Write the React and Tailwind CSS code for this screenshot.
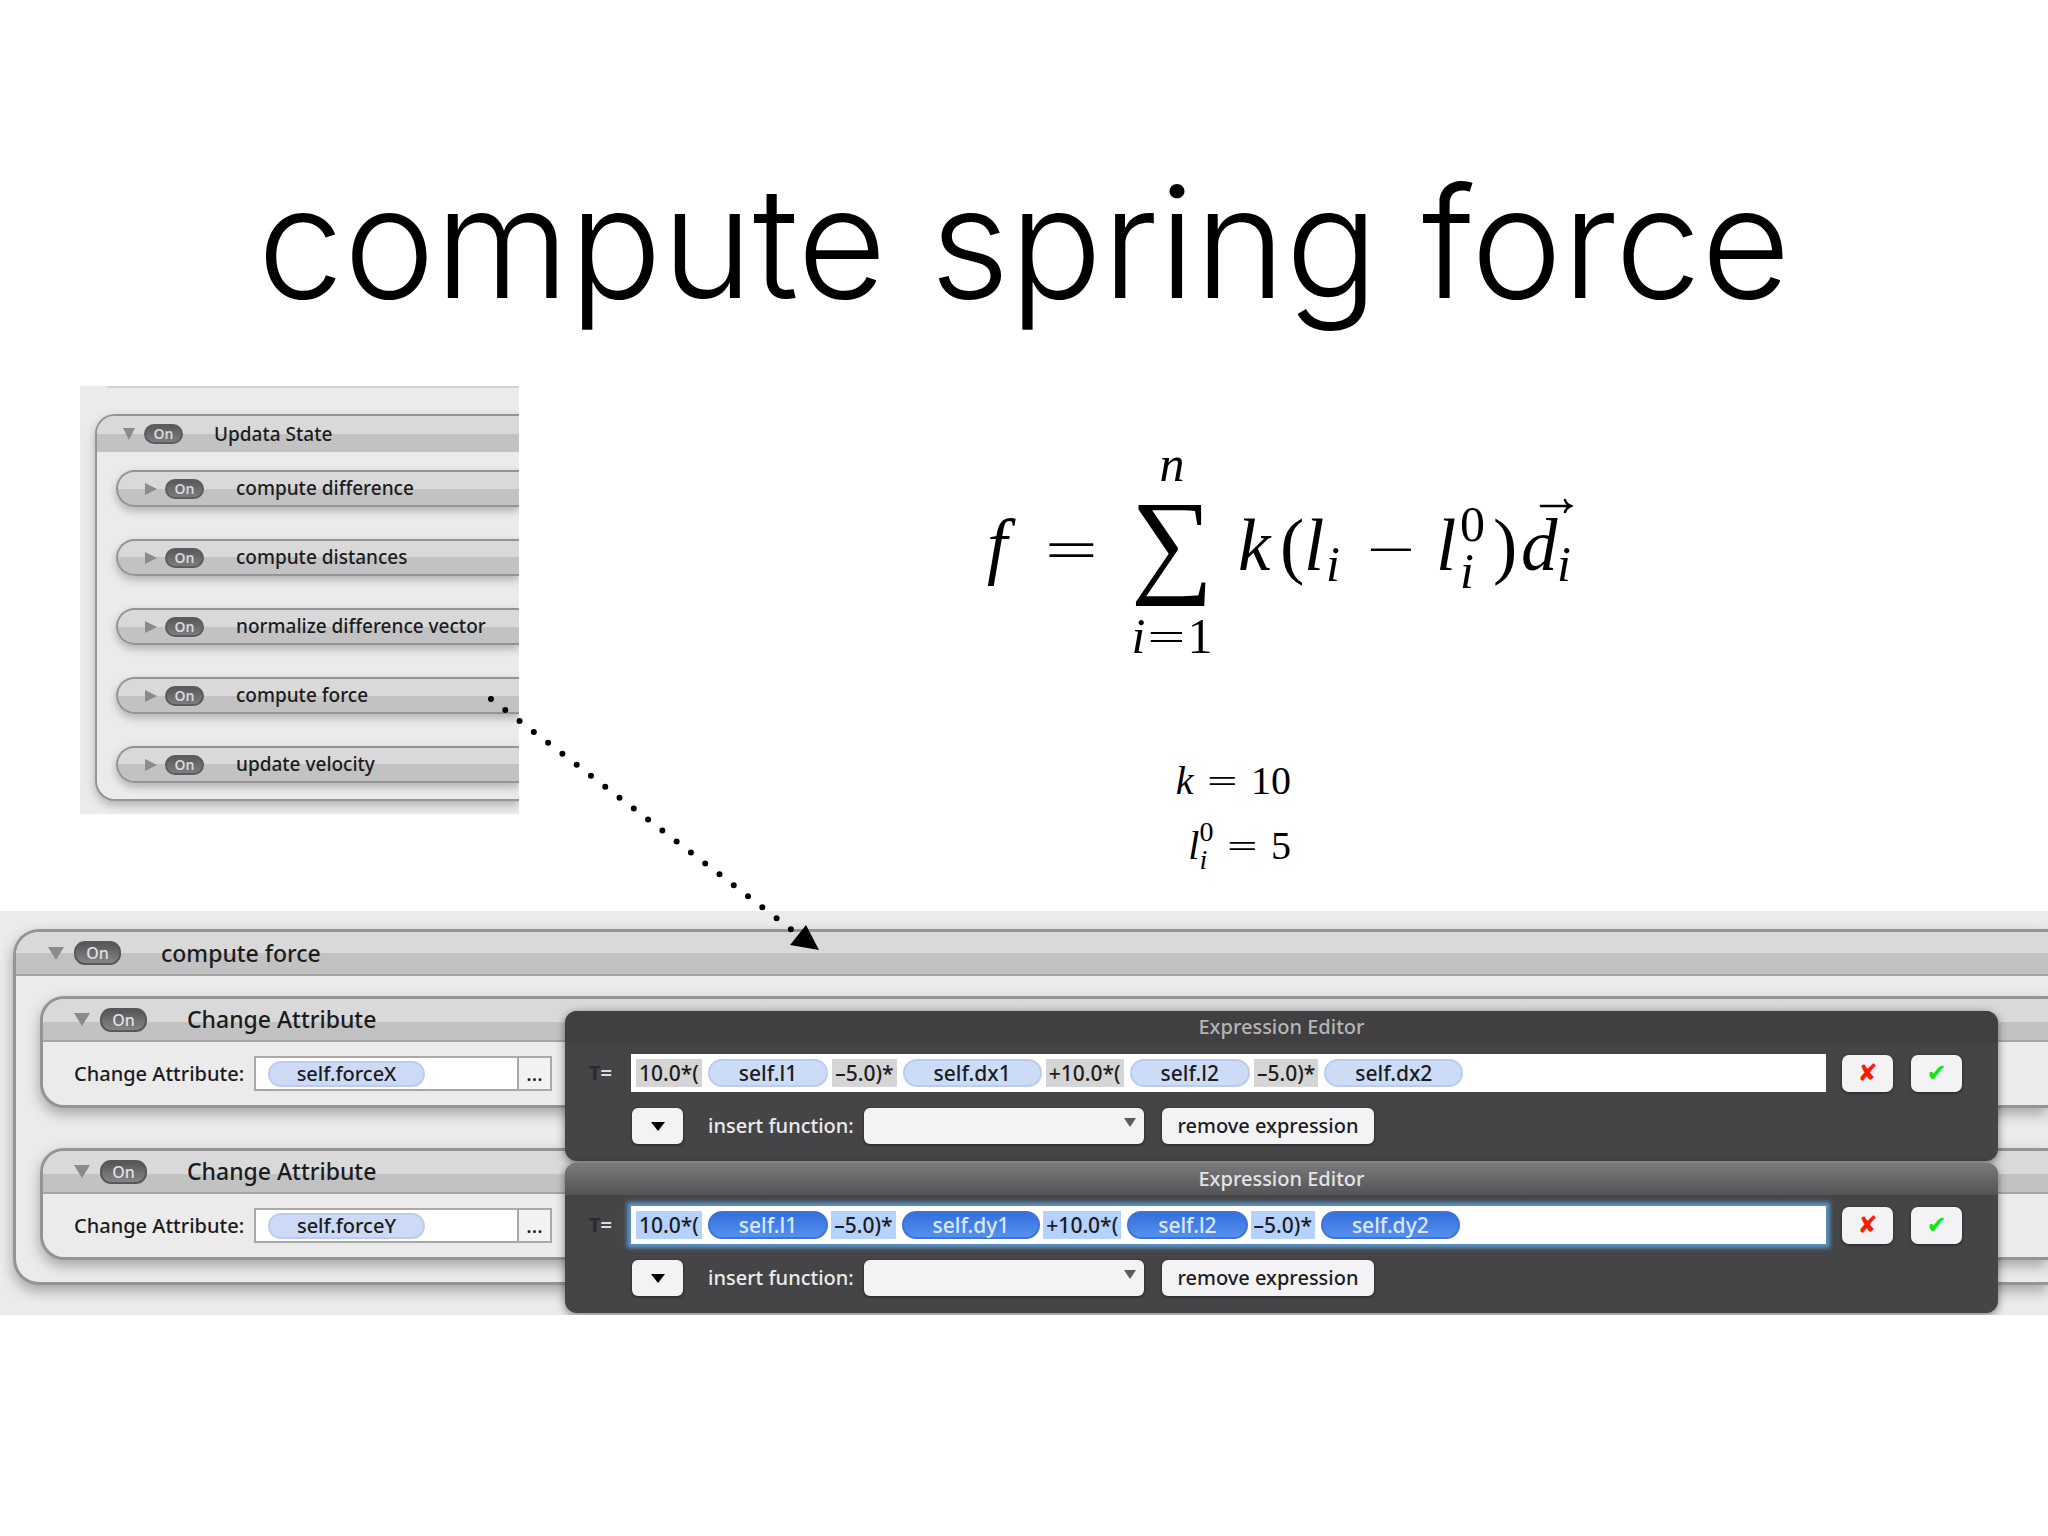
import React from "react";

const steps = [
  "compute difference",
  "compute distances",
  "normalize difference vector",
  "compute force",
  "update velocity",
];

const attributes = [
  { id: "force-x", value: "self.forceX" },
  { id: "force-y", value: "self.forceY" },
];

const editors = [
  { id: "expr-x", active: false, vars: ["self.l1", "self.dx1", "self.l2", "self.dx2"] },
  { id: "expr-y", active: true, vars: ["self.l1", "self.dy1", "self.l2", "self.dy2"] },
];

const operators = ["10.0*(", "–5.0)*", "+10.0*(", "–5.0)*"];

const Triangle = ({ open, className }) => (
  <svg viewBox="0 0 12 12" className={className} fill="#8b8b8d" preserveAspectRatio="none">
    {open ? <path d="M0 0H12L6 12Z" /> : <path d="M0 0L12 6L0 12Z" />}
  </svg>
);

const SmallOn = () => (
  <button className="w-[39px] h-5 rounded-full bg-linear-to-b from-[#5a5a5c] to-[#7d7d80] border-2 border-[#5c5c5e] text-sm leading-4 font-semibold text-[#d8d8d8]">
    On
  </button>
);

const LargeOn = () => (
  <button className="w-[47px] h-6 rounded-[11px] bg-linear-to-b from-[#565658] to-[#858587] border-2 border-[#58585a] text-base leading-5 font-medium text-[#e2e2e2]">
    On
  </button>
);

// left list with the steps of one update
const StatePanel = () => (
  <section className="w-[439px] h-[428px] overflow-hidden bg-[#ebebec] pl-[15px] text-[#1c1c1e]">
    <div className="h-[2px] ml-3 bg-[#d2d2d3]" />
    <div className="mt-[26px] h-[387px] rounded-l-[20px] border-2 border-r-0 border-[#949496] shadow-[0_4px_10px_rgba(0,0,0,0.25)] overflow-hidden bg-[#ebebec]">
      <header className="h-9 flex items-center pl-[26px] bg-linear-to-b from-[#d9d9da] from-50% to-[#c2c2c3] to-50%">
        <Triangle open className="w-3 h-3" />
        <div className="ml-[9px] flex">
          <SmallOn />
        </div>
        <h2 className="ml-[31px] text-[19px] font-medium">Updata State</h2>
      </header>
      <ul className="flex flex-col gap-8 pt-[18px] pl-[19px]">
        {steps.map((step) => (
          <li
            key={step}
            className="h-[37px] flex items-center rounded-l-full border-2 border-r-0 border-[#949496] pl-[27px] bg-linear-to-b from-[#d9d9da] from-50% to-[#c2c2c3] to-50% shadow-[0_4px_9px_rgba(0,0,0,0.25)]"
          >
            <Triangle className="w-3 h-3" />
            <div className="ml-2 flex">
              <SmallOn />
            </div>
            <span className="ml-8 text-[19px] font-medium whitespace-nowrap">{step}</span>
          </li>
        ))}
      </ul>
    </div>
  </section>
);

const SubSup = ({ className, sup, sub }) => (
  <span className={className}>
    <span className="not-italic">{sup}</span>
    <span>{sub}</span>
  </span>
);

const Formula = () => (
  <div className="flex items-center h-[200px] font-['Liberation_Serif',serif] italic text-[73px] leading-[80px] text-black">
    <span className="w-[63px] pl-2 pb-3">f</span>
    <span className="w-20 pb-2 not-italic font-['DejaVu_Sans',sans-serif] font-extralight text-[70px]">=</span>
    <span className="w-[100px] pb-1 flex flex-col items-center text-[50px] leading-[48px]">
      <span>n</span>
      <span className="pb-4 not-italic text-[116px] leading-[108px]">∑</span>
      <span className="whitespace-nowrap">
        i<span className="not-italic font-['DejaVu_Sans',sans-serif] font-extralight">=</span>
        <span className="not-italic">1</span>
      </span>
    </span>
    <span className="w-[58px] pl-4 pb-3">k</span>
    <span className="w-6 pb-3 not-italic">(</span>
    <span className="w-[22px] pb-3">l</span>
    <span className="w-[38px] pt-6 text-[50px] leading-[50px]">i</span>
    <span className="w-[72px] pb-2 not-italic font-['DejaVu_Sans',sans-serif] font-extralight text-[64px]">−</span>
    <span className="w-6 pb-3">l</span>
    <SubSup className="w-[33px] pb-2 flex flex-col text-[50px] leading-[47px]" sup="0" sub="i" />
    <span className="w-7 pb-3 not-italic">)</span>
    <span className="relative w-9 pb-3">
      d
      <svg viewBox="0 0 34 16" className="absolute left-[18px] -top-2 w-[34px] h-4" fill="none" stroke="#000" strokeWidth="2.5" strokeLinecap="round">
        <path d="M2 8H31M26 2Q27 6 32 8Q27 10 26 14" />
      </svg>
    </span>
    <span className="pt-6 text-[50px] leading-[50px]">i</span>
  </div>
);

const Constants = () => (
  <div className="flex flex-col items-end font-['Liberation_Serif',serif] italic text-[40px] leading-[65px] text-black">
    <div className="flex gap-3">
      <span>k</span>
      <span className="not-italic font-['DejaVu_Sans',sans-serif] font-extralight">=</span>
      <span className="not-italic">10</span>
    </div>
    <div className="flex items-center gap-3">
      <span className="flex items-center">
        l
        <SubSup className="flex flex-col text-[28px] leading-[28px]" sup="0" sub="i" />
      </span>
      <span className="not-italic font-['DejaVu_Sans',sans-serif] font-extralight">=</span>
      <span className="not-italic">5</span>
    </div>
  </div>
);

const AttributeBox = ({ id, value }) => (
  <div className="h-[112px] rounded-l-[24px] border-[3px] border-r-0 border-[#949496] overflow-hidden bg-[#ebebec] shadow-[0_6px_14px_rgba(0,0,0,0.3)]">
    <header className="h-[43px] flex items-center pl-[31px] border-b-2 border-[#a5a5a7] bg-linear-to-b from-[#d9d9da] from-55% to-[#c2c2c3] to-55%">
      <Triangle open className="w-4 h-[13px]" />
      <div className="ml-[10px] flex">
        <LargeOn />
      </div>
      <h3 className="ml-10 text-[23px] font-medium">Change Attribute</h3>
    </header>
    <div className="flex items-center pt-[14px] pl-[31px]">
      <label htmlFor={id} className="w-[180px] text-xl leading-8 font-medium">
        Change Attribute:
      </label>
      <div className="w-[265px] h-[35px] flex items-center pl-3 bg-white border-2 border-[#a9a9ab]">
        <span className="w-[157px] h-[26px] rounded-full bg-[#cddaf5] border-2 border-[#bccbf0] text-center text-xl leading-[22px] font-medium">
          {value}
        </span>
        <input id={id} className="min-w-0 flex-1 outline-none" />
      </div>
      <button className="w-[33px] h-[35px] border-2 border-l-0 border-[#a9a9ab] bg-[#f2f2f3] text-xl leading-7 font-medium">
        ...
      </button>
    </div>
  </div>
);

const ExpressionEditor = ({ id, active, vars }) => (
  <section className="h-[150px] rounded-[12px] bg-[#454446] shadow-[0_2px_8px_rgba(0,0,0,0.5)] overflow-hidden">
    <h3 className={active
      ? "h-8 text-center text-xl leading-8 font-medium text-[#e4e4e4] bg-linear-to-b from-[#7b7a7c] to-[#535254]"
      : "h-8 text-center text-xl leading-8 font-medium text-[#b5b5b5] bg-[#403f41]"}
    >
      Expression Editor
    </h3>
    <div className="mt-[11px] flex items-center pl-6 pr-9">
      <label htmlFor={id} className="w-[42px] flex text-xl font-bold text-[#dcdcdc]">
        <span className="text-[#2b2b2c]">T</span>
        <span>=</span>
      </label>
      <div className={active
        ? "flex-1 h-[38px] flex items-center pl-[5px] bg-white shadow-[0_0_4px_4px_#5b93c4]"
        : "flex-1 h-[38px] flex items-center pl-[5px] bg-white"}
      >
        {vars.map((name, i) => (
          <React.Fragment key={i}>
            <span className={active
              ? "h-7 px-[3px] mr-[6px] bg-[#b4d2fb] text-[21px] leading-7 font-medium text-[#1c1c1e]"
              : "h-7 px-[3px] mr-[6px] bg-[#d5d5d5] text-[21px] leading-7 font-medium text-[#1c1c1e]"}
            >
              {operators[i]}
            </span>
            <span className={active
              ? "h-7 px-[29px] mr-[3px] rounded-full border-2 border-[#3f74d6] bg-linear-to-b from-[#3470dc] to-[#5690ee] text-[21px] leading-6 font-medium text-[#dbe8ff]"
              : "h-7 px-[29px] mr-1 rounded-full border-2 border-[#bccbf0] bg-[#cddcf6] text-[21px] leading-6 font-medium text-[#1c1c1e]"}
            >
              {name}
            </span>
          </React.Fragment>
        ))}
        <input id={id} className="min-w-0 flex-1 outline-none" />
      </div>
      <button aria-label="Cancel" className="ml-4 w-[51px] h-[37px] rounded-[7px] bg-[#f3f2f4] shadow-[0_1px_3px_#222] font-['DejaVu_Sans',sans-serif] text-2xl font-bold text-[#fb1b04]">
        ✘
      </button>
      <button aria-label="Accept" className="ml-[18px] w-[51px] h-[37px] rounded-[7px] bg-[#f3f2f4] shadow-[0_1px_3px_#222] font-['DejaVu_Sans',sans-serif] text-2xl font-bold text-[#0be90b]">
        ✔
      </button>
    </div>
    <div className="mt-4 flex items-center pl-[67px]">
      <button aria-label="Variables" className="w-[51px] h-9 flex items-center justify-center rounded-[6px] bg-[#f3f2f4] shadow-[0_1px_3px_#222]">
        <svg viewBox="0 0 14 9" className="w-[14px] h-[9px]">
          <path d="M0 0H14L7 9Z" />
        </svg>
      </button>
      <label htmlFor={`${id}-fn`} className="ml-[25px] w-[156px] text-xl font-medium whitespace-nowrap text-[#ececec]">
        insert function:
      </label>
      <div className="relative">
        <select id={`${id}-fn`} className="block w-[280px] h-9 appearance-none rounded-[6px] bg-[#f3f2f4] shadow-[0_1px_3px_#222]" />
        <svg viewBox="0 0 12 9" className="absolute right-2 top-[10px] w-3 h-[9px] pointer-events-none" fill="#5b5b5d">
          <path d="M0 0H12L6 9Z" />
        </svg>
      </div>
      <button className="ml-[18px] w-[212px] h-9 rounded-[6px] bg-[#f3f2f4] shadow-[0_1px_3px_#222] text-xl leading-8 font-medium text-[#1c1c1e]">
        remove expression
      </button>
    </div>
  </section>
);

const ForcePanel = () => (
  <section className="relative overflow-hidden h-[404px] bg-[#ebebec] pt-[18px] pl-[13px] text-[#1c1c1e]">
    <div className="h-[356px] rounded-l-[26px] border-[3px] border-r-0 border-[#949496] overflow-hidden shadow-[0_6px_14px_rgba(0,0,0,0.3)] bg-[#ebebec]">
      <header className="h-[44px] flex items-center pl-8 border-b-2 border-[#a5a5a7] bg-linear-to-b from-[#d9d9da] from-50% to-[#c2c2c3] to-50%">
        <Triangle open className="w-4 h-[13px]" />
        <div className="ml-[10px] flex">
          <LargeOn />
        </div>
        <h2 className="ml-10 text-[23px] font-medium">compute force</h2>
      </header>
      <div className="flex flex-col gap-10 pt-5 pl-6">
        {attributes.map((attr) => (
          <AttributeBox key={attr.id} {...attr} />
        ))}
      </div>
    </div>
    {/* floating editors cover the right part of the attribute boxes */}
    <div className="absolute left-[565px] right-[50px] top-[100px] flex flex-col gap-[2px]">
      {editors.map((editor) => (
        <ExpressionEditor key={editor.id} {...editor} />
      ))}
    </div>
  </section>
);

const App = () => {
  return (
    <main className="relative min-h-screen overflow-hidden bg-white font-['Noto_Sans','Open_Sans',sans-serif]">
      <h1 className="pt-[142px] text-center font-['Inter',sans-serif] font-light text-[154px] leading-[200px] text-black">
        compute spring force
      </h1>
      <div className="mt-11 flex items-start pl-20 h-[525px]">
        <StatePanel />
        <div className="ml-[460px] pt-[66px] flex flex-col">
          <Formula />
          <div className="mt-24 w-[312px]">
            <Constants />
          </div>
        </div>
      </div>
      <ForcePanel />
      <svg viewBox="0 0 340 260" className="absolute left-[485px] top-[693px] w-[340px] h-[260px] pointer-events-none">
        <path d="M6 6L307 237" stroke="#000" strokeWidth="6" strokeLinecap="round" strokeDasharray="0 18" />
        <path d="M321 232L305 252L334 257Z" />
      </svg>
    </main>
  );
};

export default App;
